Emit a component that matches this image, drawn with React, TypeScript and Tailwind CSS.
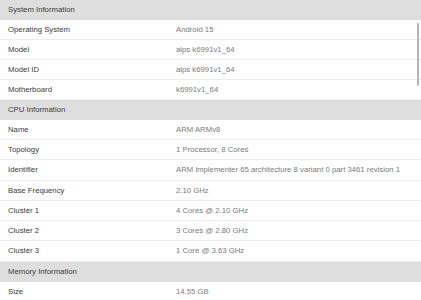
import { type FC } from 'react';

type Row = { label: string; value: string; h?: string };
type Section = { title: string; rows: Row[] };

const sections: Section[] = [
  {
    title: 'System Information',
    rows: [
      { label: 'Operating System', value: 'Android 15' },
      { label: 'Model', value: 'alps k6991v1_64' },
      { label: 'Model ID', value: 'alps k6991v1_64' },
      { label: 'Motherboard', value: 'k6991v1_64' },
    ],
  },
  {
    title: 'CPU Information',
    rows: [
      { label: 'Name', value: 'ARM ARMv8' },
      { label: 'Topology', value: '1 Processor, 8 Cores' },
      { label: 'Identifier', value: 'ARM implementer 65 architecture 8 variant 0 part 3461 revision 1', h: 'h-[21px]' },
      { label: 'Base Frequency', value: '2.10 GHz' },
      { label: 'Cluster 1', value: '4 Cores @ 2.10 GHz' },
      { label: 'Cluster 2', value: '3 Cores @ 2.80 GHz' },
      { label: 'Cluster 3', value: '1 Core @ 3.63 GHz', h: 'h-[21px]' },
    ],
  },
  {
    title: 'Memory Information',
    rows: [{ label: 'Size', value: '14.55 GB' }],
  },
];

const InfoRow: FC<{ row: Row }> = ({ row }) => (
  <div className={`flex items-center border-b border-[#ececec] bg-white ${row.h ?? 'h-[20px]'}`}>
    <div className="w-[176px] shrink-0 pl-2 text-[#3a3a3a]">{row.label}</div>
    <div className="text-[#7a7a7a] whitespace-nowrap">{row.value}</div>
  </div>
);

export default function App() {
  return (
    <div
      className="relative w-[421px] h-[300px] overflow-hidden bg-white text-[7.75px] leading-none"
      style={{ fontFamily: '"Liberation Sans", Arial, sans-serif' }}
    >
      {sections.map((section) => (
        <div key={section.title}>
          <div className="flex items-center h-[20px] bg-[#dedede] pl-2 text-[#3a3a3a]">{section.title}</div>
          {section.rows.map((row) => (
            <InfoRow key={row.label} row={row} />
          ))}
        </div>
      ))}

      {/* scroll indicator */}
      <div className="absolute left-[417px] top-[23px] w-[2px] h-[63px] bg-[#b5b5b5] rounded-full" />
    </div>
  );
}
